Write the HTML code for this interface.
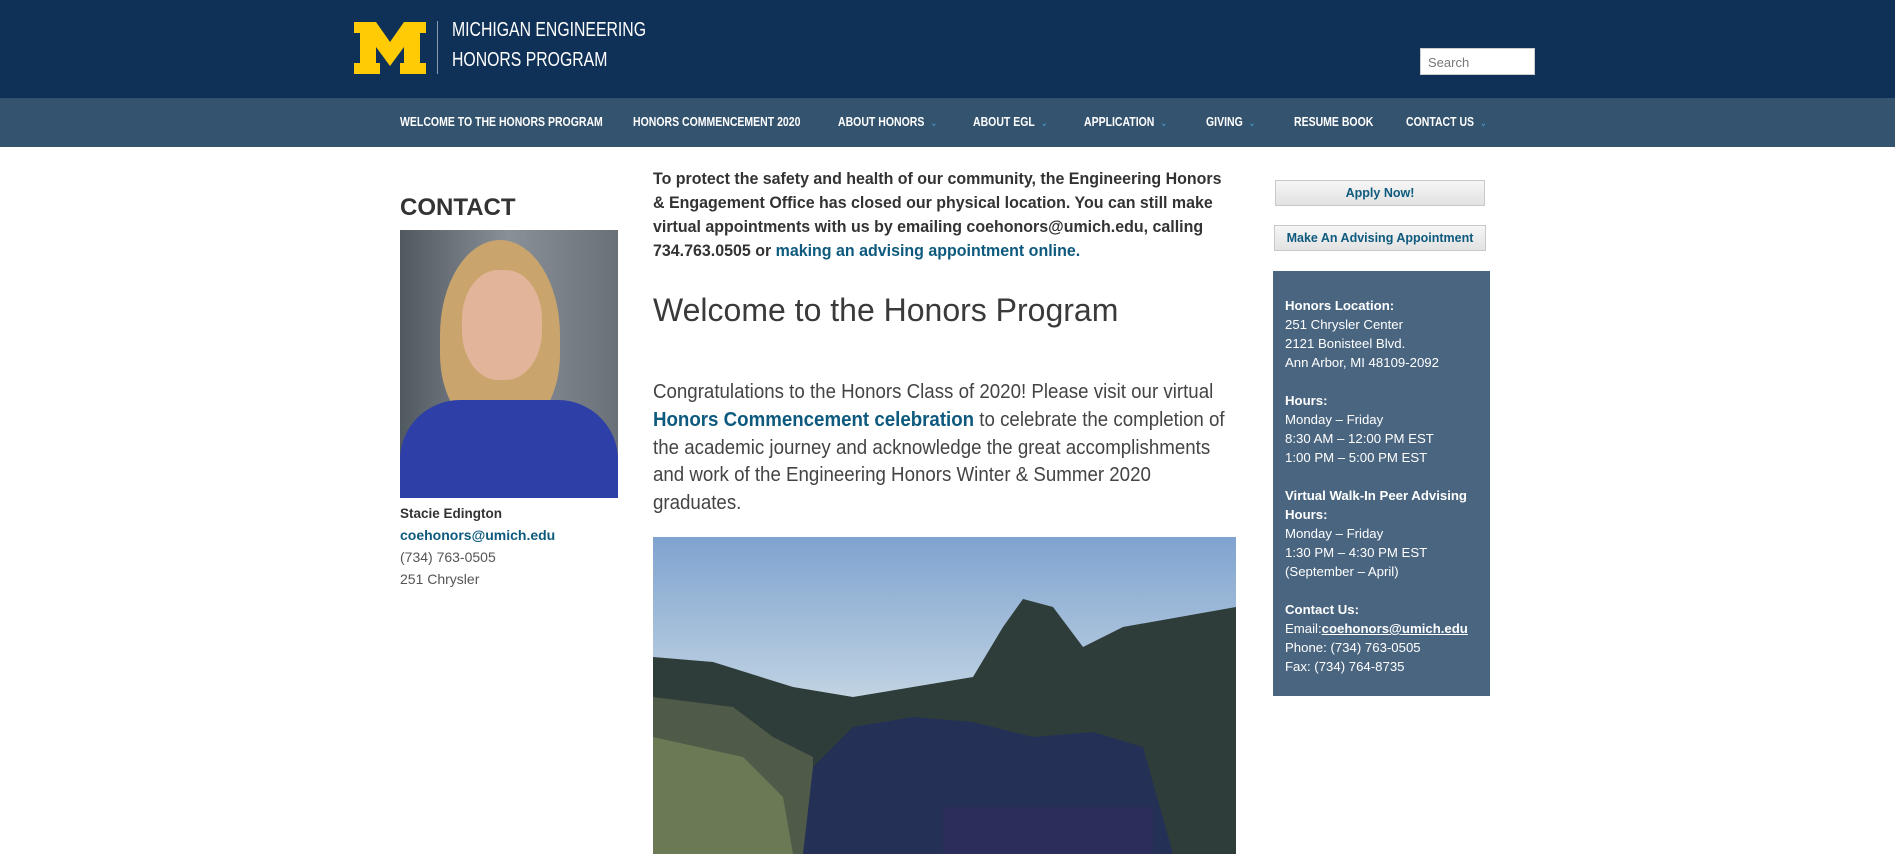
<!DOCTYPE html>
<html><head><meta charset="utf-8">
<style>
*{margin:0;padding:0;box-sizing:border-box}
body{width:1895px;height:854px;overflow:hidden;background:#fff;font-family:"Liberation Sans",Arial,sans-serif;position:relative}
.a{position:absolute;white-space:nowrap;transform-origin:0 0}
.hdr{position:absolute;left:0;top:0;width:1895px;height:98px;background:#0f3157}
.nav{position:absolute;left:0;top:98px;width:1895px;height:49px;background:#34536f}
.nv{position:absolute;top:115px;color:#fff;font:bold 12.5px "Liberation Sans",sans-serif;transform:scaleX(0.84);transform-origin:0 0;white-space:nowrap}
.car{color:#4aa0e0;font-size:10px;margin-left:7px;font-weight:normal}
.btn{position:absolute;background:linear-gradient(#f6f6f6,#e2e2e2);border:1px solid #c8c8c8;color:#0e5a7e;font:bold 12.5px "Liberation Sans",sans-serif;text-align:center}
.box{position:absolute;left:1273px;top:271px;width:217px;height:425px;background:#4a6580;color:#fff;font-size:13.2px;line-height:19px;padding:25px 0 0 12px}
</style></head><body>
<div class="hdr"></div>
<svg class="a" style="left:354px;top:22px" width="72" height="52" viewBox="0 0 72 52">
<path fill="#ffcb05" d="M0 0H22L36 20L50 0H72V11H66V41H72V52H46V41H50V25L36 44L22 25V41H26V52H0V41H6V11H0Z"/>
</svg>
<div class="a" style="left:437px;top:21px;width:1px;height:53px;background:#8a9bb0"></div>
<div class="a" style="left:452px;top:19px;color:#fff;font-size:20px;transform:scaleX(0.79)">MICHIGAN ENGINEERING</div>
<div class="a" style="left:452px;top:49px;color:#fff;font-size:20px;transform:scaleX(0.79)">HONORS PROGRAM</div>
<div class="a" style="left:1420px;top:48px;width:115px;height:27px;background:#fff;border:1px solid #ccc;color:#777;font-size:13px;padding:6px 0 0 7px">Search</div>
<div class="nav"></div>
<div class="nv" style="left:400px">WELCOME TO THE HONORS PROGRAM</div>
<div class="nv" style="left:633px">HONORS COMMENCEMENT 2020</div>
<div class="nv" style="left:838px">ABOUT HONORS<span class="car">&#8964;</span></div>
<div class="nv" style="left:973px">ABOUT EGL<span class="car">&#8964;</span></div>
<div class="nv" style="left:1084px">APPLICATION<span class="car">&#8964;</span></div>
<div class="nv" style="left:1206px">GIVING<span class="car">&#8964;</span></div>
<div class="nv" style="left:1294px">RESUME BOOK</div>
<div class="nv" style="left:1406px">CONTACT US<span class="car">&#8964;</span></div>

<div class="a" style="left:400px;top:194px;font:bold 24px 'Liberation Sans',sans-serif;color:#333">CONTACT</div>
<div class="a" style="left:400px;top:230px;width:218px;height:268px;overflow:hidden;background:linear-gradient(90deg,#505860,#8a9098 50%,#6a7078)">
 <div style="position:absolute;left:40px;top:10px;width:120px;height:190px;border-radius:50% 50% 40% 40%;background:#c9a56d"></div>
 <div style="position:absolute;left:62px;top:40px;width:80px;height:110px;border-radius:45%;background:#e2b59a"></div>
 <div style="position:absolute;left:0;top:170px;width:218px;height:120px;border-radius:60px 60px 0 0;background:#2e3fa8"></div>
</div>
<div class="a" style="left:400px;top:506px;font:bold 13.5px 'Liberation Sans',sans-serif;color:#333">Stacie Edington</div>
<div class="a" style="left:400px;top:527px;font:bold 14px 'Liberation Sans',sans-serif;color:#0e5a7e">coehonors@umich.edu</div>
<div class="a" style="left:400px;top:549px;font-size:14px;color:#555">(734) 763-0505</div>
<div class="a" style="left:400px;top:571px;font-size:14px;color:#555">251 Chrysler</div>

<div class="a" style="left:653px;top:167px;font-weight:bold;font-size:17px;line-height:24px;color:#333;transform:scaleX(0.94)">To protect the safety and health of our community, the Engineering Honors<br>&amp; Engagement Office has closed our physical location. You can still make<br>virtual appointments with us by emailing coehonors@umich.edu, calling<br>734.763.0505 or <span style="color:#0e5a7e">making an advising appointment online.</span></div>
<div class="a" style="left:653px;top:292px;font-size:32px;color:#3a3a3a">Welcome to the Honors Program</div>
<div class="a" style="left:653px;top:379px;font-size:20px;line-height:27.8px;color:#444;transform:scaleX(0.935)">Congratulations to the Honors Class of 2020! Please visit our virtual<br><b style="color:#0e5a7e">Honors Commencement celebration</b> to celebrate the completion of<br>the academic journey and acknowledge the great accomplishments<br>and work of the Engineering Honors Winter &amp; Summer 2020<br>graduates.</div>

<div class="a" style="left:653px;top:537px;width:583px;height:317px;overflow:hidden;background:linear-gradient(#7fa3cf,#b8cde0 45%,#d8e0e6 60%)">
 <svg width="583" height="317" viewBox="0 0 583 317" style="position:absolute;left:0;top:0">
  <path fill="#2f3d3a" d="M0 120L60 125L140 150L200 160L260 150L320 140L350 90L370 62L400 70L430 110L470 90L583 70V317H0Z"/>
  <path fill="#4f5a48" d="M0 160L80 170L120 200L160 220V317H0Z"/>
  <path fill="#6b7a55" d="M0 200L90 220L130 260L140 317H0Z"/>
  <path fill="#243056" d="M150 317L160 230L200 190L260 180L320 185L380 200L440 195L490 210L520 317Z"/>
  <path fill="#2b2e5a" d="M290 270H500V317H290Z"/>
 </svg>
</div>

<div class="btn" style="left:1275px;top:180px;width:210px;height:26px;line-height:24px">Apply Now!</div>
<div class="btn" style="left:1274px;top:225px;width:212px;height:26px;line-height:24px">Make An Advising Appointment</div>
<div class="box">
<b>Honors Location:</b><br>251 Chrysler Center<br>2121 Bonisteel Blvd.<br>Ann Arbor, MI 48109-2092<br><br>
<b>Hours:</b><br>Monday – Friday<br>8:30 AM – 12:00 PM EST<br>1:00 PM – 5:00 PM EST<br><br>
<b>Virtual Walk-In Peer Advising<br>Hours:</b><br>Monday – Friday<br>1:30 PM – 4:30 PM EST<br>(September – April)<br><br>
<b>Contact Us:</b><br>Email:<b style="text-decoration:underline">coehonors@umich.edu</b><br>Phone: (734) 763-0505<br>Fax: (734) 764-8735
</div>
</body></html>
